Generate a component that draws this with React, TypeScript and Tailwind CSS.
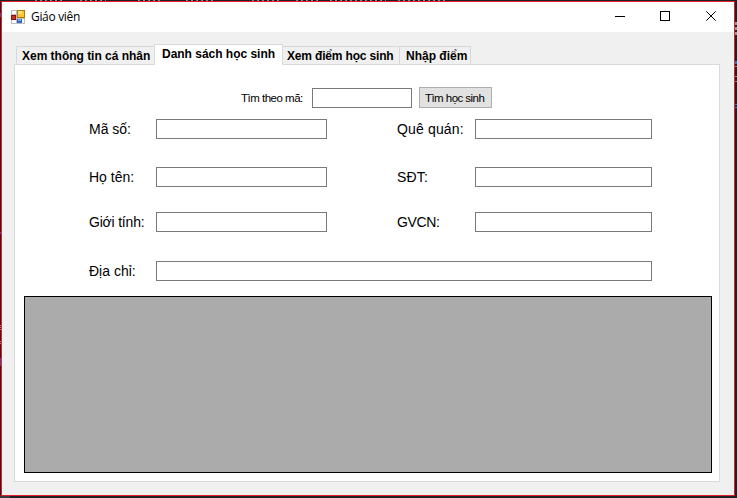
import type { ReactNode } from "react";

const box = "block h-5 shrink-0 border border-[#7a7a7a] bg-white px-1 text-sm outline-none";

function AppIcon() {
  return (
    <svg width="14" height="14" viewBox="0 0 14 14" shapeRendering="crispEdges">
      <rect width="14" height="14" fill="#bdbdc0" />
      <rect x="1" y="1" width="4" height="3" fill="#fff" />
      <rect x="1" y="10" width="4" height="3" fill="#fff" />
      <rect x="0" y="5" width="5" height="5" fill="#8e1010" />
      <rect x="1" y="6" width="3" height="3" fill="#d0311c" />
      <rect x="6" y="0" width="8" height="8" fill="#a87b10" />
      <rect x="7" y="1" width="6" height="6" fill="#f9c734" />
      <rect x="7" y="1" width="4" height="3" fill="#fde07a" />
      <rect x="6" y="9" width="5" height="4" fill="#3467c8" />
      <rect x="7" y="9" width="3" height="2" fill="#79a5f0" />
      <rect x="11" y="9" width="2" height="4" fill="#fff" />
    </svg>
  );
}

function Desktop() {
  return (
    <svg className="absolute inset-0" width="737" height="498" shapeRendering="crispEdges">
      <rect width="737" height="498" fill="#202023" />
      <path d="M35 .5h28M80 .5h26M138 .5h22M186 .5h30M252 .5h28M296 .5h24M330 .5h56M398 .5h50" stroke="#8a8380" strokeDasharray="2 3" />
      <path d="M.5 13v4M.5 232v2M.5 358v8" stroke="#2c5a86" />
      <path d="M.5 325v6M.5 341v4" stroke="#8d8d8d" strokeDasharray="1 1" />
      <path d="M736 22v3M736 27v3M736 32v3" stroke="#9a9a9a" strokeWidth="2" />
      <path d="M736 61v3M736 104v1M736 107v1" stroke="#2b78b0" strokeWidth="2" />
      <path d="M736 66v1M736 76v1M736 81v1" stroke="#a08058" strokeWidth="2" />
      <rect x="0" y="496" width="10" height="2" fill="#39393e" />
    </svg>
  );
}

function TitleBar() {
  return (
    <header className="flex h-[30px] shrink-0 items-center bg-white pl-[9px] text-black">
      <AppIcon />
      <h1 className="ml-1.5 grow font-['Open_Sans',sans-serif] text-[12px] leading-4 tracking-[-0.32px]">Giáo viên</h1>
      <svg width="124" height="30" viewBox="0 0 124 30" fill="none" stroke="#000">
        <path d="M5 14.5h10" shapeRendering="crispEdges" />
        <rect x="50.5" y="9.5" width="9" height="9" shapeRendering="crispEdges" />
        <path d="M96.3 9.3l9.4 9.4M105.7 9.3l-9.4 9.4" />
      </svg>
    </header>
  );
}

function Tab({ className, children }: { className: string; children: ReactNode }) {
  return (
    <button className={`-mb-px flex shrink-0 items-start whitespace-nowrap border border-[#d9d9d9] pt-px text-left text-[12px] font-bold leading-4 ${className}`}>
      {children}
    </button>
  );
}

function Label({ className, children }: { className: string; children: ReactNode }) {
  return <label className={`shrink-0 whitespace-nowrap text-[14px] leading-4 ${className}`}>{children}</label>;
}

export default function App() {
  return (
    <div className="relative flex h-[498px] w-[737px] overflow-hidden pl-px pt-px font-['Liberation_Sans',Arial,sans-serif] text-black">
      <Desktop />
      <main className="relative flex h-[495px] w-[734px] flex-col border border-[#e51c2b] bg-[#f0f0f0]">
        <TitleBar />
        <nav className="flex h-8 shrink-0 items-end pl-3.5">
          <Tab className="h-[19px] w-[138px] border-r-0 pl-[5px] tracking-[-0.02px]">Xem thông tin cá nhân</Tab>
          <Tab className="relative z-10 h-[21px] w-[129px] border-b-0 bg-white pl-[7px] tracking-[-0.02px]">Danh sách học sinh</Tab>
          <Tab className="h-[19px] w-[117px] border-l-0 pl-1 tracking-[-0.17px]">Xem điểm học sinh</Tab>
          <Tab className="h-[19px] w-[71px] border-l-0 pl-1.5 tracking-[0px]">Nhập điểm</Tab>
        </nav>
        <section className="ml-3 h-[418px] w-[706px] border border-[#dadada] bg-white">
          <div className="mt-[22px] flex h-[21px] items-center pl-[226px]">
            <label className="w-[71px] shrink-0 whitespace-nowrap text-[11.5px] leading-4 tracking-[-0.5px]">Tìm theo mã:</label>
            <input className={`${box} w-[100px]`} />
            <button className="ml-[7px] h-[21px] w-[73px] shrink-0 whitespace-nowrap border border-[#adadad] bg-[#e1e1e1] pl-[5px] text-left text-[11.5px] leading-4 tracking-[-0.55px]">Tìm học sinh</button>
          </div>
          <form className="pl-[74px]">
            <div className="mt-[11px] flex items-center">
              <Label className="w-[67px]">Mã số:</Label>
              <input className={`${box} w-[171px]`} />
              <Label className="ml-[70px] w-[78px] tracking-[0.15px]">Quê quán:</Label>
              <input className={`${box} w-[177px]`} />
            </div>
            <div className="mt-7 flex items-center">
              <Label className="w-[67px]">Họ tên:</Label>
              <input className={`${box} w-[171px]`} />
              <Label className="ml-[70px] w-[78px] tracking-[0.2px]">SĐT:</Label>
              <input className={`${box} w-[177px]`} />
            </div>
            <div className="mt-[25px] flex items-center">
              <Label className="w-[67px] tracking-[-0.2px]">Giới tính:</Label>
              <input className={`${box} w-[171px]`} />
              <Label className="ml-[70px] w-[78px] tracking-[-0.35px]">GVCN:</Label>
              <input className={`${box} w-[177px]`} />
            </div>
            <div className="mt-[29px] flex items-center">
              <Label className="w-[67px]">Địa chỉ:</Label>
              <input className={`${box} w-[496px]`} />
            </div>
          </form>
          <div className="ml-[9px] mt-[15px] h-[177px] w-[688px] border border-black bg-[#ababab]" />
        </section>
      </main>
    </div>
  );
}
